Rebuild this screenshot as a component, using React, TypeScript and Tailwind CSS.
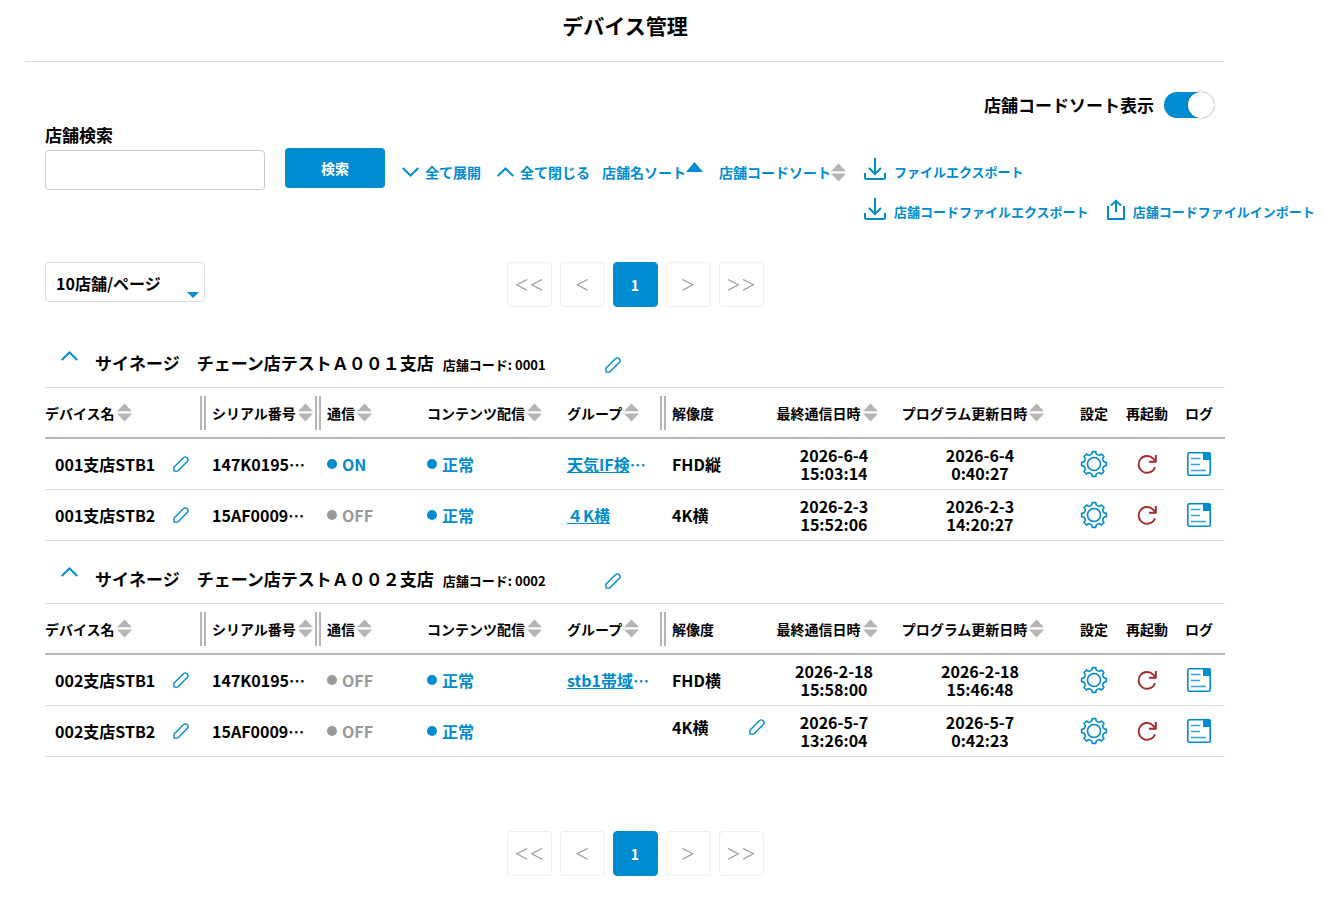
import { useState } from "react";
import clsx from "clsx";

type Device = {
  name: string;
  serial: string;
  online: boolean;
  group?: { label: string; truncated: boolean };
  resolution: string;
  editableResolution?: boolean;
  lastSeen: [string, string];
  updated: [string, string];
};

type Store = {
  name: string;
  code: string;
  devices: Device[];
};

const STORES: Store[] = [
  {
    name: "サイネージ　チェーン店テストＡ００１支店",
    code: "0001",
    devices: [
      {
        name: "001支店STB1",
        serial: "147K0195",
        online: true,
        group: { label: "天気IF検", truncated: true },
        resolution: "FHD縦",
        lastSeen: ["2026-6-4", "15:03:14"],
        updated: ["2026-6-4", "0:40:27"],
      },
      {
        name: "001支店STB2",
        serial: "15AF0009",
        online: false,
        group: { label: "４K横", truncated: false },
        resolution: "4K横",
        lastSeen: ["2026-2-3", "15:52:06"],
        updated: ["2026-2-3", "14:20:27"],
      },
    ],
  },
  {
    name: "サイネージ　チェーン店テストＡ００２支店",
    code: "0002",
    devices: [
      {
        name: "002支店STB1",
        serial: "147K0195",
        online: false,
        group: { label: "stb1帯域", truncated: true },
        resolution: "FHD横",
        lastSeen: ["2026-2-18", "15:58:00"],
        updated: ["2026-2-18", "15:46:48"],
      },
      {
        name: "002支店STB2",
        serial: "15AF0009",
        online: false,
        resolution: "4K横",
        editableResolution: true,
        lastSeen: ["2026-5-7", "13:26:04"],
        updated: ["2026-5-7", "0:42:23"],
      },
    ],
  },
];

// Eight-toothed outline around the centre of a 28x28 box
const GEAR_PATH = (() => {
  const at = (radius: number, deg: number) => {
    const rad = (deg * Math.PI) / 180;
    return `${(14 + radius * Math.cos(rad)).toFixed(2)} ${(14 + radius * Math.sin(rad)).toFixed(2)}`;
  };
  let d = "";
  for (let i = 0; i < 8; i++) {
    const a = i * 45;
    d += `${i === 0 ? "M" : "L"}${at(12.5, a - 8)} L${at(12.5, a + 8)} L${at(10.4, a + 12)} Q${at(9.3, a + 22.5)} ${at(10.4, a + 33)} `;
  }
  return d + "Z";
})();

function ChevronIcon({ down = false }: { down?: boolean }) {
  return (
    <svg width="17" height="10" viewBox="0 0 17 10" fill="none" stroke="currentColor" strokeWidth="2" className="shrink-0" aria-hidden="true">
      <path d={down ? "M0.7 1L8.5 8.5L16.3 1" : "M0.7 9L8.5 1.5L16.3 9"} />
    </svg>
  );
}

function SortIcon() {
  return (
    <svg width="15" height="19" viewBox="0 0 15 19" className="shrink-0 text-[#b5b5b5]" fill="currentColor" aria-hidden="true">
      <path d="M0 8.2L7.5 0.5L15 8.2ZM0 10.6L7.5 18.5L15 10.6Z" />
    </svg>
  );
}

function PencilIcon() {
  return (
    <svg width="16" height="16" viewBox="0 0 16 16" fill="none" stroke="currentColor" strokeWidth="1.4" strokeLinejoin="round" aria-hidden="true">
      <path d="M0.9 15.1V11.2L10.4 1.7Q12.4 0 14.2 1.8Q16 3.7 14.3 5.6L4.8 15.1Z" />
    </svg>
  );
}

function DownloadIcon() {
  return (
    <svg width="22" height="24" viewBox="0 0 22 24" fill="none" stroke="currentColor" strokeWidth="2" className="shrink-0" aria-hidden="true">
      <path d="M11 1V17M5 11L11 17L17 11" />
      <path d="M1 16V20.5Q1 22 2.5 22H19.5Q21 22 21 20.5V16" />
    </svg>
  );
}

function UploadIcon() {
  return (
    <svg width="18" height="22" viewBox="0 0 18 22" fill="none" stroke="currentColor" strokeWidth="2" className="shrink-0" aria-hidden="true">
      <path d="M9 13V2M4 6.5L9 1.8L14 6.5" />
      <path d="M1 7V20H17V7" />
    </svg>
  );
}

function GearIcon() {
  return (
    <svg width="28" height="28" viewBox="0 0 28 28" fill="none" stroke="currentColor" strokeWidth="1.6" strokeLinejoin="round" aria-hidden="true">
      <path d={GEAR_PATH} />
      <circle cx="14" cy="14" r="6.5" />
    </svg>
  );
}

function RestartIcon() {
  return (
    <svg width="20" height="20" viewBox="0 0 20 20" fill="none" stroke="currentColor" strokeWidth="1.9" aria-hidden="true">
      <path d="M18 13.2A8.4 8.4 0 1 1 16.2 4.6L18.6 7.4" />
      <path d="M18.8 1V7.8H12" />
    </svg>
  );
}

function LogIcon() {
  return (
    <svg width="24" height="24" viewBox="0 0 24 24" fill="none" stroke="currentColor" strokeWidth="1.6" aria-hidden="true">
      <rect x="0.8" y="0.8" width="22.4" height="22.4" rx="1.5" />
      <path d="M16 0.4H22.4Q23.6 0.4 23.6 1.6V8H16Z" fill="currentColor" stroke="none" />
      <path d="M4 6.5H13.5M4 12.5H13M4 18.5H19" strokeOpacity="0.8" />
    </svg>
  );
}

function Pagination() {
  return (
    <nav aria-label="ページ" className="flex gap-2">
      {["＜＜", "＜", "1", "＞", "＞＞"].map((label) => (
        <button
          key={label}
          type="button"
          className={clsx(
            "size-[45px] rounded border text-center",
            label === "1"
              ? "border-[#008cd0] bg-[#008cd0] text-sm font-bold text-white"
              : "border-[#eee] bg-white text-[15px] font-normal text-[#999]"
          )}
        >
          {label}
        </button>
      ))}
    </nav>
  );
}

type HeaderCellProps = {
  label: string;
  sortable?: boolean;
  divider?: boolean;
  centered?: boolean;
  className?: string;
};

function HeaderCell({ label, sortable = false, divider = false, centered = false, className }: HeaderCellProps) {
  return (
    <th scope="col" className={clsx("border-b-2 border-[#b5b5b5]", className)}>
      <div className={clsx("flex items-center", divider && "justify-between pr-1.5", centered && "justify-center")}>
        {sortable ? (
          <button type="button" className="inline-flex items-center gap-0.5 whitespace-nowrap">
            {label}
            <SortIcon />
          </button>
        ) : (
          <span className="whitespace-nowrap">{label}</span>
        )}
        {divider && <span className="h-[34px] w-1.5 border-x-2 border-[#b5b5b5]" />}
      </div>
    </th>
  );
}

function Status({ label, active }: { label: string; active: boolean }) {
  return (
    <span className={clsx("flex items-center gap-[5px]", active ? "text-[#008cd0]" : "text-[#999]")}>
      <span className="size-2.5 rounded-full bg-current" />
      {label}
    </span>
  );
}

function DeviceRow({ device }: { device: Device }) {
  return (
    <tr className="h-[51px] *:border-b *:border-[#ddd]">
      <td className="pl-2.5">
        <div className="flex items-center justify-between pr-[23px]">
          {device.name}
          <button type="button" aria-label="デバイス名を編集" className="text-[#008cd0]">
            <PencilIcon />
          </button>
        </div>
      </td>
      <td>{device.serial}⋯</td>
      <td>
        <Status label={device.online ? "ON" : "OFF"} active={device.online} />
      </td>
      <td>
        <Status label="正常" active />
      </td>
      <td className="whitespace-nowrap text-[#008cd0]">
        {device.group && (
          <>
            <a href="#" className="underline">{device.group.label}</a>
            {device.group.truncated && "⋯"}
          </>
        )}
      </td>
      <td>
        {device.editableResolution ? (
          <div className="flex items-center justify-between pb-2">
            {device.resolution}
            <button type="button" aria-label="解像度を編集" className="-mr-1 text-[#008cd0]">
              <PencilIcon />
            </button>
          </div>
        ) : (
          device.resolution
        )}
      </td>
      <td className="text-center leading-[18px]">
        {device.lastSeen[0]}
        <br />
        {device.lastSeen[1]}
      </td>
      <td className="text-center leading-[18px]">
        {device.updated[0]}
        <br />
        {device.updated[1]}
      </td>
      <td className="pl-3.5">
        <button type="button" aria-label="設定" className="mx-auto block text-[#008cd0]">
          <GearIcon />
        </button>
      </td>
      <td>
        <button type="button" aria-label="再起動" className="mx-auto block text-[#a52a2a]">
          <RestartIcon />
        </button>
      </td>
      <td>
        <button type="button" aria-label="ログ" className="mx-auto block text-[#008cd0]">
          <LogIcon />
        </button>
      </td>
    </tr>
  );
}

function StoreSection({ store }: { store: Store }) {
  const [open, setOpen] = useState(true);

  return (
    <section>
      <div className="flex items-start pt-[26px] pb-3 pl-4">
        <button type="button" aria-label="開閉" onClick={() => setOpen(!open)} className="mr-[17px] text-[#008cd0]">
          <ChevronIcon down={!open} />
        </button>
        <h2 className="text-[17px] leading-6 font-bold">
          {store.name}
          <span className="ml-[9px] text-[13px] leading-none">店舗コード: {store.code}</span>
        </h2>
        <button type="button" aria-label="店舗を編集" className="mt-1.5 ml-[59px] text-[#008cd0]">
          <PencilIcon />
        </button>
      </div>
      {open && (
        <table className="w-full table-fixed border-separate border-spacing-0 border-t border-[#ddd] text-left font-bold">
          <colgroup>
            <col className="w-[167px]" />
            <col className="w-[115px]" />
            <col className="w-[100px]" />
            <col className="w-[140px]" />
            <col className="w-[105px]" />
            <col className="w-[89px]" />
            <col className="w-[146px]" />
            <col className="w-[146px]" />
            <col className="w-[68px]" />
            <col className="w-[52px]" />
            <col className="w-[52px]" />
          </colgroup>
          <thead>
            <tr className="h-[51px] text-sm">
              <HeaderCell label="デバイス名" sortable divider />
              <HeaderCell label="シリアル番号" sortable divider />
              <HeaderCell label="通信" sortable />
              <HeaderCell label="コンテンツ配信" sortable />
              <HeaderCell label="グループ" sortable divider />
              <HeaderCell label="解像度" />
              <HeaderCell label="最終通信日時" sortable centered className="pr-3.5" />
              <HeaderCell label="プログラム更新日時" sortable centered className="pr-3.5" />
              <HeaderCell label="設定" centered className="pl-3.5" />
              <HeaderCell label="再起動" centered />
              <HeaderCell label="ログ" centered />
            </tr>
          </thead>
          <tbody>
            {store.devices.map((device) => (
              <DeviceRow key={device.name} device={device} />
            ))}
          </tbody>
        </table>
      )}
    </section>
  );
}

export default function App() {
  const [showCodeSort, setShowCodeSort] = useState(true);
  const [query, setQuery] = useState("");

  return (
    <div lang="ja" className="min-h-screen bg-white pb-6 pl-[25px] font-['Noto_Sans_CJK_JP',sans-serif] text-base text-black">
      {/* Title */}
      <header className="max-w-[1200px] border-b border-[#ddd] pt-[9px] pb-5">
        <h1 className="text-center text-[21px] leading-8 font-bold">デバイス管理</h1>
      </header>

      {/* Code sort switch */}
      <div className="flex max-w-[1189px] justify-end pt-[30px]">
        <label className="flex items-center gap-2.5 text-[17px] leading-[26px] font-bold">
          店舗コードソート表示
          <input
            type="checkbox"
            role="switch"
            checked={showCodeSort}
            onChange={(e) => setShowCodeSort(e.target.checked)}
            className="h-[26px] w-[50px] appearance-none rounded-full bg-[#ccc] before:block before:size-[26px] before:rounded-full before:bg-white before:shadow-[0_0_3px_rgba(0,0,0,0.25)] checked:bg-[#008cd0] checked:before:ml-6"
          />
        </label>
      </div>

      {/* Search and actions */}
      <div className="flex items-start pt-1.5 pl-5">
        <div className="mr-5 flex flex-col gap-1">
          <label htmlFor="store-search" className="text-[17px] leading-[22px] font-bold">
            店舗検索
          </label>
          <input
            id="store-search"
            type="text"
            value={query}
            onChange={(e) => setQuery(e.target.value)}
            className="h-10 w-[220px] rounded border border-[#ccc] px-2.5"
          />
        </div>
        <button type="button" className="mt-6 mr-[17px] h-10 w-[100px] shrink-0 rounded bg-[#008cd0] text-sm font-bold text-white">
          検索
        </button>
        <div className="mt-[38px] flex shrink-0 items-start gap-3 text-sm font-bold text-[#008cd0]">
          <div className="flex gap-4">
            <button type="button" className="flex items-center gap-1.5">
              <ChevronIcon down />
              全て展開
            </button>
            <button type="button" className="flex items-center gap-1.5">
              <ChevronIcon />
              全て閉じる
            </button>
          </div>
          <div className="flex gap-4">
            <button type="button" className="flex items-start">
              店舗名ソート
              <svg width="17" height="10" viewBox="0 0 17 10" fill="currentColor" aria-hidden="true">
                <path d="M0 10L8.5 0L17 10Z" />
              </svg>
            </button>
            <button type="button" className="flex items-center">
              店舗コードソート
              <SortIcon />
            </button>
          </div>
        </div>
        <div className="mt-[33px] ml-[18px] flex shrink-0 flex-col gap-4 text-[13px] font-bold whitespace-nowrap text-[#008cd0]">
          <button type="button" className="flex h-6 items-end gap-2">
            <DownloadIcon />
            ファイルエクスポート
          </button>
          <div className="flex gap-[18px]">
            <button type="button" className="flex h-6 items-end gap-2">
              <DownloadIcon />
              店舗コードファイルエクスポート
            </button>
            <button type="button" className="flex h-6 items-end gap-2">
              <UploadIcon />
              店舗コードファイルインポート
            </button>
          </div>
        </div>
      </div>

      <main className="max-w-[1200px] pl-5">
        <div className="grid grid-cols-[1fr_auto_1fr] items-start pt-[41px] pb-[18px]">
          <div className="relative w-40">
            <select
              aria-label="表示件数"
              className="h-10 w-full appearance-none rounded border border-[#ddd] bg-white px-2.5 pt-0.5 font-bold"
            >
              <option>10店舗/ページ</option>
              <option>20店舗/ページ</option>
              <option>50店舗/ページ</option>
            </select>
            <svg width="12" height="6" viewBox="0 0 12 6" className="pointer-events-none absolute right-1.5 bottom-1 fill-[#008cd0]" aria-hidden="true">
              <path d="M0 0H12L6 6Z" />
            </svg>
          </div>
          <Pagination />
        </div>

        {STORES.map((store) => (
          <StoreSection key={store.code} store={store} />
        ))}

        <div className="flex justify-center pt-[74px]">
          <Pagination />
        </div>
      </main>
    </div>
  );
}
